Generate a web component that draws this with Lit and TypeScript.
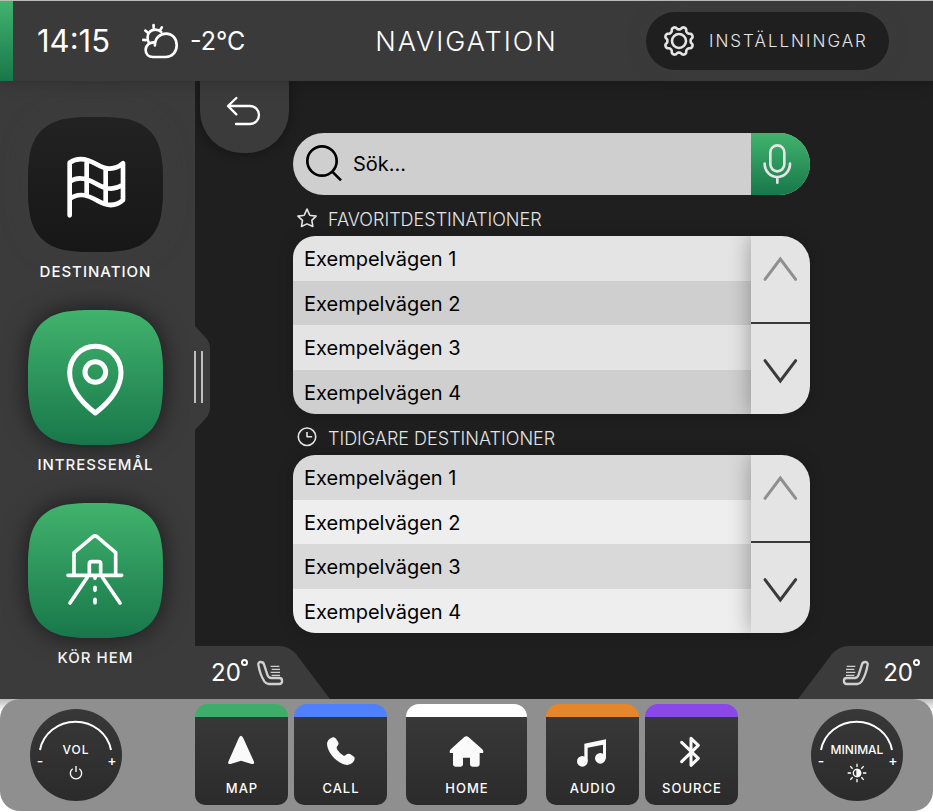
import { LitElement, html, css, svg } from "lit";
import { customElement, property } from "lit/decorators.js";

const squircle =
  "M0 67C0 56 0 50 1 44C3 18 18 3 44 1C50 0 56 0 67 0H68C79 0 85 0 91 1C117 3 132 18 134 44C135 50 135 56 135 67V68C135 79 135 85 134 91C132 117 117 132 91 134C85 135 79 135 68 135H67C56 135 50 135 44 134C18 132 3 117 1 91C0 85 0 79 0 68Z";

// Eight-lobed cog outline, with a notch at each compass point.
const cog = (() => {
  const pts: string[] = [];
  for (let i = 0; i < 160; i++) {
    const a = (i / 160) * Math.PI * 2;
    const r = 13 - 1.5 * Math.tanh(1.6 * Math.cos(8 * a));
    pts.push(`${(16 + r * Math.cos(a)).toFixed(2)} ${(16 + r * Math.sin(a)).toFixed(2)}`);
  }
  return `M${pts.join("L")}Z`;
})();

@customElement("side-tile")
export class SideTile extends LitElement {
  @property() label = "";
  @property() icon = "";
  @property({ type: Boolean }) active = false;

  static styles = css`
    :host { display: block; }
    .tile {
      display: flex; flex-direction: column; align-items: center; width: 100%;
      padding: 0; border: 0; background: none; color: #fff; cursor: pointer;
      font: 500 15px/20px Inter, "Liberation Sans", sans-serif; letter-spacing: 1px;
    }
    .face { display: grid; width: 135px; height: 135px; margin-bottom: 10px; }
    .face svg { grid-area: 1 / 1; width: 135px; height: 135px; overflow: visible; }
    .plate { filter: drop-shadow(0 0 12px #18181c); }
    .plate.dark { filter: drop-shadow(0 0 14px #4444); }
    .glyph { z-index: 1; fill: none; stroke: #fff; stroke-linecap: round; stroke-linejoin: round; }
  `;

  glyph() {
    switch (this.icon) {
      case "flag":
        return html`<svg class="glyph" viewBox="84 51 405 405" stroke-width="14" aria-hidden="true">
          <path d="M209 346V188C235 169 262 176 290 193S345 211 369 190V300C345 322 318 318 290 301S235 276 209 297M209 245C235 226 262 235 290 252S345 270 369 254M260 180V288M317 206V310"/></svg>`;
      case "pin":
        return html`<svg class="glyph" viewBox="84 45 405 405" stroke-width="15" aria-hidden="true">
          <path d="M286 354C240 318 209 275 209 233A77 79 0 0 1 363 233C363 275 332 318 286 354Z"/><circle cx="286" cy="231" r="31"/></svg>`;
      default:
        return html`<svg class="glyph" viewBox="84 39 405 405" stroke-width="11" aria-hidden="true">
          <path d="M222 256V188L279 140Q285 135 291 140L347 188V256M204 256H365M268 256V222Q268 215 275 215H295Q302 215 302 222V256M262 262L210 339M307 262L360 339M285 258V265M285 292V301M285 328V338"/></svg>`;
    }
  }

  render() {
    return html`<button class="tile" type="button">
      <span class="face">
        <svg class="plate ${this.active ? "dark" : ""}" viewBox="0 0 135 135" aria-hidden="true">
          <defs><linearGradient id="g" x2="0" y2="1">
            <stop offset="0" stop-color=${this.active ? "#222222" : "#41b36d"}></stop>
            <stop offset="1" stop-color=${this.active ? "#171717" : "#18774a"}></stop>
          </linearGradient></defs>
          <path d=${squircle} fill="url(#g)"></path>
        </svg>
        ${this.glyph()}
      </span>
      <span>${this.label}</span>
    </button>`;
  }
}

@customElement("place-list")
export class PlaceList extends LitElement {
  @property() heading = "";
  @property() icon = "";
  @property() tone = "";
  @property({ attribute: false }) places: string[] = [];

  static styles = css`
    :host { display: block; font-family: Inter, "Liberation Sans", sans-serif; }
    h2 {
      display: flex; align-items: center; gap: 10px; height: 41px; margin: 0; padding-left: 3px;
      padding-top: 8px; box-sizing: border-box; color: #e4e4e4; font-size: 18px; line-height: 24px; font-weight: 300;
    }
    h2 svg { width: 22px; height: 24px; fill: none; stroke: #e4e4e4; stroke-width: 5; stroke-linejoin: round; }
    .box { display: flex; height: 178px; border-radius: 22px 28px 28px 22px; overflow: hidden; box-shadow: 0 0 16px #0003; }
    ul { flex: 1; display: grid; grid-auto-rows: 1fr; margin: 0; padding: 0; list-style: none; }
    li { display: flex; background: #e4e4e4; }
    li:nth-child(even) { background: #cfcfcf; }
    .recent li { background: #d9d9d9; }
    .recent li:nth-child(even) { background: #eeeeee; }
    .place {
      flex: 1; padding: 2px 11px 0; border: 0; background: none; text-align: left; color: #000;
      font: 400 20px/24px Inter, "Liberation Sans", sans-serif;
    }
    .scroll { display: flex; flex-direction: column; width: 59px; background: #e4e4e4; box-shadow: 0 0 22px #0005; }
    .scroll button { display: block; padding: 0; border: 0; background: none; }
    .scroll svg { display: block; width: 59px; fill: none; stroke-width: 9; stroke-linecap: round; }
    .up { height: 86px; stroke: #8f8f8f; }
    .down { height: 90px; stroke: #3a3a3a; }
    .rule { height: 2px; background: #3a3a3a; }
  `;

  render() {
    return html`
      <h2>
        <svg viewBox="48 262 68 74" aria-hidden="true">
          ${this.icon === "star"
            ? svg`<path d="M82 265L90 283Q91 285 94 285L110 287L97 300L100 319L82 311L65 319L68 300L54 287L70 285Q73 285 74 283Z"/>`
            : svg`<circle cx="82" cy="292" r="27"/><path d="M82 277V292H98"/>`}
        </svg>
        ${this.heading}
      </h2>
      <div class="box ${this.tone}">
        <ul>${this.places.map((p) => html`<li><button class="place" type="button">${p}</button></li>`)}</ul>
        <div class="scroll">
          <button type="button" aria-label="Upp"><svg class="up" viewBox="573 348 177 258"><path d="M615 478L661 417L707 478"/></svg></button>
          <div class="rule"></div>
          <button type="button" aria-label="Ned"><svg class="down" viewBox="573 612 177 270"><path d="M615 722L661 783L707 722"/></svg></button>
        </div>
      </div>`;
  }
}

@customElement("dial-knob")
export class DialKnob extends LitElement {
  @property() label = "";
  @property() icon = "";

  static styles = css`
    :host { display: block; }
    .knob {
      position: relative; display: grid; grid-template-columns: 12px 1fr 12px; grid-template-rows: 24px 24px;
      align-content: center; padding: 12px 4px 0 4px; box-sizing: border-box; width: 92px; height: 92px; border-radius: 50%;
      background: linear-gradient(#383838, #2b2b2b); color: #fff;
      font: 500 12px/20px Inter, "Liberation Sans", sans-serif;
    }
    .arc { position: absolute; inset: 0; fill: none; stroke: #fff; stroke-width: 2; pointer-events: none; }
    .name { padding-top: 3px; text-align: center; white-space: nowrap; }
    .vol .name { letter-spacing: 1px; }
    button { padding: 0; border: 0; background: none; color: inherit; font: inherit; font-size: 14px; }
    .step { padding-top: 14px; }
    .mode { grid-column: 2; display: grid; place-items: center; }
    .mode svg { width: 20px; height: 20px; fill: none; stroke: #fff; }
  `;

  render() {
    return html`<div class="knob ${this.icon === "power" ? "vol" : "dim"}" role="group" aria-label=${this.label}>
      <svg class="arc" viewBox="0 0 92 92" aria-hidden="true"><path d="M10 41A36 34 0 0 1 81 41"/></svg>
      <button class="step" type="button">-</button>
      <span class="name">${this.label}</span>
      <button class="step" type="button">+</button>
      <button class="mode" type="button" aria-label=${this.icon}>
        ${this.icon === "power"
          ? html`<svg viewBox="-30 -30 60 60" stroke-width="4"><path d="M-10 -13A17 17 0 1 0 10 -13M0 -21V-3"/></svg>`
          : html`<svg viewBox="-30 -30 60 60" stroke-width="4"><circle r="11"/><path d="M0 -11A11 11 0 0 1 0 11Z" fill="#fff"/>
              <path d="M0 -18V-28M0 18V28M-18 0H-28M18 0H28M-13 -13L-20 -20M13 13L20 20M13 -13L20 -20M-13 13L-20 20"/></svg>`}
      </button>
    </div>`;
  }
}

const seat = html`<svg class="seat" viewBox="770 58 84 78" aria-hidden="true">
  <path d="M777 72C775 62 791 61 794 71L804 102Q807 112 816 112H840C851 112 851 130 840 130H808Q800 129 795 122C785 107 780 90 777 72Z"/>
  <path class="heat" d="M814 77H840M817 86H842M814 95H842M817 104H842"/></svg>`;

const apps = [
  { name: "MAP", tone: "green", box: "15 66 279 180", art: svg`<path d="M153 122Q157 122 160 130L192 200Q194 209 185 207L153 197L122 207Q112 209 115 200L146 130Q149 122 153 122Z"/>` },
  { name: "CALL", tone: "blue", box: "312 66 279 180", art: svg`<path d="M428 127Q434 125 438 131L444 140Q448 147 442 153Q438 157 442 164Q450 176 461 182Q465 183 468 179Q474 174 480 177L490 184Q497 189 492 197Q484 211 470 210C440 205 412 172 411 147Q411 134 428 127Z"/>` },
  { name: "HOME", tone: "white wide", box: "648 66 363 180", art: svg`<path d="M829 124Q833 124 836 127L876 162Q882 168 879 174H869V208Q869 215 862 215H847Q840 215 840 208V188H819V208Q819 215 812 215H796Q789 215 789 208V174H780Q777 168 783 162L822 127Q825 124 829 124Z"/>` },
  { name: "AUDIO", tone: "orange", box: "33 66 279 180", art: svg`<circle cx="142" cy="199" r="16"/><circle cx="196" cy="190" r="16"/><path d="M148 146L213 133V190H204V149L158 158V199H148Z"/>` },
  { name: "SOURCE", tone: "purple", box: "330 66 279 180", art: svg`<path class="line" d="M440 142L490 190L468 211V130L490 151L440 200"/>` },
];

@customElement("app-root")
export class AppRoot extends LitElement {
  static styles = css`
    :host {
      display: flex; flex-direction: column; min-height: 100vh; background: #1f1f1f; color: #fff;
      font-family: Inter, "Liberation Sans", sans-serif;
    }
    button { font: inherit; color: inherit; border: 0; padding: 0; cursor: pointer; }
    header {
      position: relative; z-index: 1; display: grid; grid-template-columns: 1fr auto 1fr; align-items: center;
      height: 81px; box-sizing: border-box; border-top: 1px solid #b9bcba; background: #3a3a3a; box-shadow: 0 2px 14px #0003;
    }
    .status { display: flex; align-items: center; height: 100%; }
    .flagbar { align-self: stretch; width: 13px; background: linear-gradient(#41b36d, #18774a); }
    .clock { margin-left: 24px; font-size: 31px; line-height: 40px; font-weight: 400; }
    .weather { width: 37px; height: 37px; margin: 0 11px 0 32px; fill: none; stroke: #fff; stroke-width: 8; stroke-linecap: round; }
    .temp { font-size: 25px; line-height: 40px; font-weight: 400; }
    h1 { margin: 0; padding-top: 2px; font-size: 27px; line-height: 40px; font-weight: 300; letter-spacing: 2px; }
    .settings {
      justify-self: end; display: flex; align-items: center; gap: 14px; width: 243px; height: 58px; margin-right: 44px;
      padding-left: 17px; border-radius: 29px; background: #1f1f1f; color: #e4e4e4;
      font-size: 17px; font-weight: 300; letter-spacing: 2px; box-shadow: 0 0 20px #4444;
    }
    .settings svg { width: 32px; height: 32px; fill: none; stroke: #e4e4e4; stroke-width: 2.6; }
    .body { flex: 1; display: grid; grid-template-columns: 195px 1fr; }
    aside {
      position: relative; display: flex; flex-direction: column; gap: 28px; padding: 36px 4px 0 0; background: #3b3b3b;
    }
    .grip {
      position: absolute; left: 100%; top: 245px; width: 15px; height: 104px; background: #3b3b3b;
      clip-path: path("M0 0L11 12Q15 16 15 23V81Q15 88 11 92L0 104Z");
    }
    .bars { position: absolute; left: 194px; top: 270px; width: 5px; height: 52px; border: 2px solid #bdbdbd; border-width: 0 2px; background: #3b3b3b; }
    main { display: grid; grid-template-columns: 98px 1fr 123px; grid-template-rows: auto 1fr; }
    .back {
      width: 89px; height: 72px; margin-left: 5px; border-radius: 0 0 42px 42px; background: #3b3b3b; box-shadow: 0 0 12px #0006;
    }
    .back svg { display: block; width: 89px; height: 72px; fill: none; stroke: #fff; stroke-width: 7; stroke-linecap: round; stroke-linejoin: round; }
    .column { padding: 52px 0 13px; }
    .search { display: flex; height: 62px; border-radius: 31px; overflow: hidden; background: #cfcfcf; }
    .search label { width: 60px; }
    .search label svg { display: block; width: 60px; height: 62px; fill: none; stroke: #000; stroke-width: 8; }
    .search input {
      flex: 1; min-width: 0; border: 0; padding: 0; background: none; outline: 0; color: #000;
      font: 400 20px/24px Inter, "Liberation Sans", sans-serif;
    }
    .search input::placeholder { color: #000; opacity: 1; }
    .mic { width: 59px; background: linear-gradient(#41b36d, #18774a); }
    .mic svg { display: block; width: 59px; height: 62px; fill: none; stroke: #e4e4e4; stroke-width: 8; stroke-linecap: round; }
    .climate { grid-column: 1 / -1; align-self: end; display: flex; justify-content: space-between; }
    .seatbtn {
      display: flex; align-items: center; box-sizing: border-box; width: 135px; height: 53px; padding-left: 16px;
      background: #3b3b3b; font-size: 24px; line-height: 32px; font-weight: 400;
      clip-path: path("M0 0H84Q94 0 101 8L135 53H0Z");
    }
    .right { flex-direction: row-reverse; padding: 0 13px 0 0; clip-path: path("M135 0H51Q41 0 34 8L0 53H135Z"); }
    .deg { align-self: flex-start; width: 3px; height: 3px; margin: 13px 0 0 0; border: 2px solid #fff; border-radius: 50%; }
    .seat { width: 28px; height: 26px; margin-left: 8px; fill: none; stroke: #d0d0d0; stroke-width: 7; }
    .right .seat { margin: 0 13px 0 0; transform: scaleX(-1); }
    .seat .heat { stroke-width: 4; }
    footer { padding-bottom: 1px; background: linear-gradient(#bbb, #fff 12px); }
    .dock {
      display: flex; align-items: center; justify-content: space-between; height: 112px; padding: 0 30px;
      border-radius: 20px; background: #8f8f8f;
    }
    nav { display: flex; gap: 6px; margin-bottom: 2px; }
    .app {
      width: 93px; height: 101px; border-top: 13px solid var(--tone); border-radius: 13px 13px 10px 10px;
      box-sizing: border-box; background: linear-gradient(#383838, #2b2b2b) padding-box; font-size: 13px; line-height: 20px; font-weight: 500; letter-spacing: 1px;
    }
    .app svg { display: block; width: 100%; height: 60px; fill: #fafafa; }
    .app .line { fill: none; stroke: #fafafa; stroke-width: 9; stroke-linecap: round; stroke-linejoin: round; }
    .app span { display: block; height: 26px; padding: 1px 0 0 1px; }
    .wide { width: 121px; margin: 0 13px; }
    .green { --tone: #3dae69; }
    .blue { --tone: #4f80ff; }
    .white { --tone: #ffffff; }
    .orange { --tone: #e5862b; }
    .purple { --tone: #8a48e8; }
  `;

  places = ["Exempelvägen 1", "Exempelvägen 2", "Exempelvägen 3", "Exempelvägen 4"];

  render() {
    return html`
      <header>
        <div class="status">
          <div class="flagbar"></div>
          <time class="clock">14:15</time>
          <svg class="weather" viewBox="426 66 112 112" aria-hidden="true">
            <path d="M465 134C465 112 480 98 499 98C518 98 531 114 531 133C531 154 517 169 498 169H459C446 169 437 160 437 148C437 134 449 123 465 125M445 122C438 100 450 86 466 86Q477 86 484 93M461 72V79M486 79L482 86M436 89L442 94M430 117L437 118"/>
          </svg>
          <span class="temp">-2°C</span>
        </div>
        <h1>NAVIGATION</h1>
        <button class="settings" type="button">
          <svg viewBox="0 0 32 32" aria-hidden="true"><path d=${cog}></path><circle cx="16" cy="16" r="7"></circle></svg>
          INSTÄLLNINGAR
        </button>
      </header>
      <div class="body">
        <aside>
          <side-tile label="DESTINATION" icon="flag" active></side-tile>
          <side-tile label="INTRESSEMÅL" icon="pin"></side-tile>
          <side-tile label="KÖR HEM" icon="home"></side-tile>
          <div class="grip"></div>
          <div class="bars"></div>
        </aside>
        <main>
          <button class="back" type="button" aria-label="Tillbaka">
            <svg viewBox="600 243 267 216"><path d="M686 318H750A27 27 0 0 1 750 372H708M709 294L684 318L709 343"/></svg>
          </button>
          <div class="column">
            <div class="search">
              <label for="q" aria-label="Sök"><svg viewBox="39 39 180 186"><circle cx="126" cy="123" r="44"/><path d="M156 154L183 181"/></svg></label>
              <input id="q" type="text" placeholder="Sök..." />
              <button class="mic" type="button" aria-label="Röst">
                <svg viewBox="573 39 177 186"><rect x="631" y="76" width="42" height="78" rx="21"/><path d="M614 131A38 40 0 0 0 690 131M652 172V188"/></svg>
              </button>
            </div>
            <place-list heading="FAVORITDESTINATIONER" icon="star" .places=${this.places}></place-list>
            <place-list heading="TIDIGARE DESTINATIONER" icon="clock" tone="recent" .places=${this.places}></place-list>
          </div>
          <div class="climate">
            <button class="seatbtn" type="button">20<span class="deg"></span>${seat}</button>
            <button class="seatbtn right" type="button"><span class="deg"></span>20${seat}</button>
          </div>
        </main>
      </div>
      <footer>
        <div class="dock">
          <dial-knob label="VOL" icon="power"></dial-knob>
          <nav>
            ${apps.map((a) => html`<button class="app ${a.tone}" type="button">
              <svg viewBox=${a.box} aria-hidden="true">${a.art}</svg><span>${a.name}</span>
            </button>`)}
          </nav>
          <dial-knob label="MINIMAL" icon="brightness"></dial-knob>
        </div>
      </footer>`;
  }
}
